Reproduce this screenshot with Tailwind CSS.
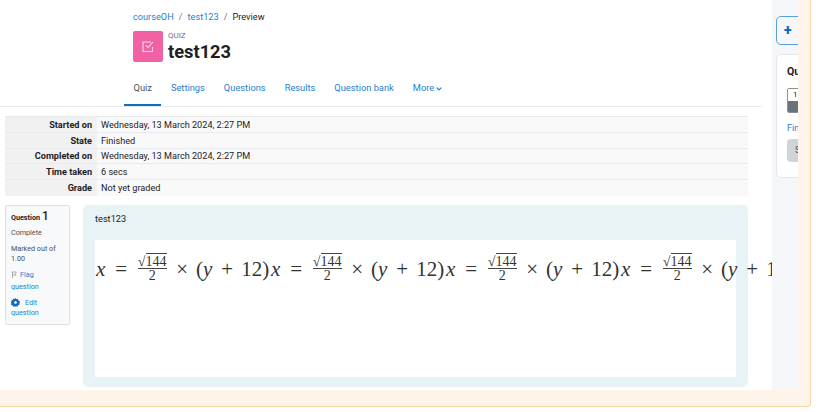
<!DOCTYPE html>
<html lang="en">
<head>
  <meta charset="UTF-8" />
  <title>test123 - Preview</title>
  <script src="https://cdn.jsdelivr.net/npm/@tailwindcss/browser@4"></script>
</head>
<body class="bg-white text-[#1d2125] font-['Roboto',sans-serif] overflow-hidden">
  <div class="w-[811px] h-[407px] flex flex-col border-r border-b border-[#fbd6a6] rounded-br-[4px] bg-[#fff4ea] overflow-hidden">
    <div class="h-[390px] flex shrink-0">
      <!-- Main column -->
      <main class="w-[772px] shrink-0 bg-white overflow-hidden">
        <header class="h-[107px] border-b border-[#e9ecef] w-[762px] relative">
          <nav class="pl-[133px] pt-[11px] h-[31px] flex gap-[5px] text-[9.200px] leading-[12px]">
            <a class="text-[#1f7fce]">courseOH</a><span class="text-[#6a737b]">/</span>
            <a class="text-[#1f7fce]">test123</a><span class="text-[#6a737b]">/</span>
            <span>Preview</span>
          </nav>
          <div class="pl-[133px] flex gap-[5px]">
            <div class="w-[30px] h-[31px] bg-[#f062a4] rounded-[2px] flex items-center justify-center">
              <svg width="13" height="13" viewBox="0 0 13 13" fill="none" stroke="#fbd8e8" stroke-width="1.1">
                <path d="M10.5 7v4.5h-9.500v-9.500h8" />
                <path d="M4 5.500l2 2 5-5.500" />
              </svg>
            </div>
            <div class="flex flex-col">
              <span class="text-[8px] leading-[9px] text-[#6a737b]">QUIZ</span>
              <h1 class="mt-[1px] text-[18.300px] leading-[22px] font-bold">test123</h1>
            </div>
          </div>
          <div class="absolute left-[124px] top-[68px] h-[38px] flex text-[9.300px] text-[#1f7fce]">
            <a class="px-[9.5px] pt-[13px] h-[38px] border-b-2 border-[#0f6cbf] text-[#495057]">Quiz</a>
            <a class="px-[9.5px] pt-[13px]">Settings</a>
            <a class="px-[9.5px] pt-[13px]">Questions</a>
            <a class="px-[9.5px] pt-[13px]">Results</a>
            <a class="px-[9.5px] pt-[13px]">Question bank</a>
            <a class="px-[9.5px] pt-[13px] flex items-start gap-[2px]">More
              <svg class="mt-[6px]" width="6" height="4" viewBox="0 0 6 4" fill="none" stroke="#1f7fce" stroke-width="1.200"><path d="M.7.7l2.300 2.300 2.300-2.300" /></svg>
            </a>
          </div>
        </header>

        <!-- Attempt summary -->
        <table class="ml-[5px] mt-[9px] w-[743px] text-[9.150px] leading-[14px] border-collapse">
          <tbody>
            <tr class="h-[16px] border-t border-[#e6e9ed]">
              <th class="w-[92px] bg-[#f1f1f1] pr-[5px] pt-[1px] text-right font-bold">Started on</th>
              <td class="bg-[#f9f9f9] pl-[4px] pt-[1px]">Wednesday, 13 March 2024, 2:27 PM</td>
            </tr>
            <tr class="h-[16px] border-t border-[#e6e9ed]">
              <th class="bg-[#f1f1f1] pr-[5px] text-right font-bold">State</th>
              <td class="bg-[#f9f9f9] pl-[4px]">Finished</td>
            </tr>
            <tr class="h-[15px] border-t border-[#e6e9ed]">
              <th class="bg-[#f1f1f1] pr-[5px] pt-[1px] leading-[13px] text-right font-bold">Completed on</th>
              <td class="bg-[#f9f9f9] pl-[4px] pt-[1px] leading-[13px]">Wednesday, 13 March 2024, 2:27 PM</td>
            </tr>
            <tr class="h-[16px] border-t border-[#e9e9e9]">
              <th class="bg-[#f1f1f1] pr-[5px] text-right font-bold">Time taken</th>
              <td class="bg-[#f9f9f9] pl-[4px]">6 secs</td>
            </tr>
            <tr class="h-[16px] border-t border-[#e9e9e9]">
              <th class="bg-[#f1f1f1] pr-[5px] text-right font-bold">Grade</th>
              <td class="bg-[#f9f9f9] pl-[4px]">Not yet graded</td>
            </tr>
          </tbody>
        </table>

        <!-- Question -->
        <div class="flex items-start gap-[13px] ml-[5px] mt-[9px]">
          <aside class="w-[65px] h-[120px] shrink-0 bg-[#f8f9fa] border border-[#dee2e6] rounded-[2px] px-[5px] pt-[3px] text-[7.200px] leading-[10.500px] text-[#495057]">
            <h3 class="font-bold text-[#1d2125] flex items-baseline gap-[2px]">Question <span class="text-[12px] leading-[14px] font-medium">1</span></h3>
            <p class="mt-[5px]">Complete</p>
            <p class="mt-[5px]">Marked out of 1.00</p>
            <a class="block mt-[4px] leading-[12px] text-[#1f7fce]">
              <svg class="inline-block mr-[3px] align-[-1px]" width="6" height="7" viewBox="0 0 6 7" fill="none" stroke="#8a9096" stroke-width=".7"><path d="M.5 1h5l-1.500 1.500 1 1.500h-3.500M1.500 1v6" /></svg>Flag<br />question
            </a>
            <a class="block mt-[5px] text-[#1f7fce]">
              <svg class="inline-block mr-[5px] align-[-2px]" width="9" height="9" viewBox="0 0 10 10" fill="#0f6cbf"><path d="M5 0l1 1.500 1.700-.500.400 1.800 1.800.500-.500 1.700L10 5l-.6 1-.1 1.700-1.700.400-.5 1.700-1.700-.500L5 10l-1-.7-1.700.500-.5-1.700-1.700-.400L.3 6 0 5l.600-1-.500-1.200 1.800-.500.400-1.800L4 1z" /><circle cx="5" cy="5" r="1.500" fill="#f8f9fa" /></svg>Edit question
            </a>
          </aside>
          <section class="w-[665px] h-[182px] shrink-0 bg-[#e7f3f5] rounded-[5px] px-[12px] pt-[8px]">
            <p class="text-[9.200px] leading-[12px] h-[27px]">test123</p>
            <div class="h-[137px] bg-white pt-[9px] pl-[1px] flex text-[#333] font-['Liberation_Serif',serif] text-[21px] leading-[40px] whitespace-nowrap">
              <div class="flex shrink-0 w-[175px] items-center h-[40px]"><i>x</i><span class="ml-[10px]">=</span><span class="ml-[10px] w-[30px] inline-flex flex-col items-center text-[14px] leading-[13px]"><span class="border-b border-[#444]">√<span class="border-t border-[#444]">144</span></span><span>2</span></span><span class="ml-[9px]">×</span><span class="ml-[8px]">(<i>y</i></span><span class="ml-[9px]">+</span><span class="ml-[8px]">12)</span></div>
              <div class="flex shrink-0 w-[175px] items-center h-[40px]"><i>x</i><span class="ml-[10px]">=</span><span class="ml-[10px] w-[30px] inline-flex flex-col items-center text-[14px] leading-[13px]"><span class="border-b border-[#444]">√<span class="border-t border-[#444]">144</span></span><span>2</span></span><span class="ml-[9px]">×</span><span class="ml-[8px]">(<i>y</i></span><span class="ml-[9px]">+</span><span class="ml-[8px]">12)</span></div>
              <div class="flex shrink-0 w-[175px] items-center h-[40px]"><i>x</i><span class="ml-[10px]">=</span><span class="ml-[10px] w-[30px] inline-flex flex-col items-center text-[14px] leading-[13px]"><span class="border-b border-[#444]">√<span class="border-t border-[#444]">144</span></span><span>2</span></span><span class="ml-[9px]">×</span><span class="ml-[8px]">(<i>y</i></span><span class="ml-[9px]">+</span><span class="ml-[8px]">12)</span></div>
              <div class="flex shrink-0 w-[175px] items-center h-[40px]"><i>x</i><span class="ml-[10px]">=</span><span class="ml-[10px] w-[30px] inline-flex flex-col items-center text-[14px] leading-[13px]"><span class="border-b border-[#444]">√<span class="border-t border-[#444]">144</span></span><span>2</span></span><span class="ml-[9px]">×</span><span class="ml-[8px]">(<i>y</i></span><span class="ml-[9px]">+</span><span class="ml-[8px]">12)</span></div>
            </div>
          </section>
        </div>
      </main>

      <!-- Side drawer, cut off by the orange strip -->
      <aside class="w-[26px] shrink-0 bg-[#f5f7fa] overflow-hidden pl-[4px] pt-[16px]">
        <div class="w-[60px] h-[29px] border border-[#5a9fdc] rounded-[5px] bg-[#f5f7fa] pl-[7px] pt-[6px] text-[#0f6cbf] text-[14px] leading-[14px] font-black">+</div>
        <div class="w-[60px] h-[124px] mt-[9px] border border-[#e4e7ea] rounded-[5px] bg-white pl-[10px] pt-[10px]">
          <p class="text-[10.500px] leading-[14px] font-bold">Qu</p>
          <div class="w-[30px] h-[25px] mt-[9px] border border-[#8a9096] rounded-[2px] overflow-hidden">
            <div class="h-[12px] pl-[5px] text-[8px] leading-[11px] bg-white">1</div>
            <div class="h-[13px] bg-[#6a737b]"></div>
          </div>
          <p class="mt-[8px] text-[9.200px] leading-[14px] text-[#1f7fce]">Finish</p>
          <div class="w-[40px] h-[23px] mt-[4px] bg-[#ced4da] rounded-[4px] pl-[8px] pt-[5px] text-[9.200px] leading-[12px] text-[#495057]">Submit</div>
        </div>
      </aside>
    </div>
  </div>
</body>
</html>
